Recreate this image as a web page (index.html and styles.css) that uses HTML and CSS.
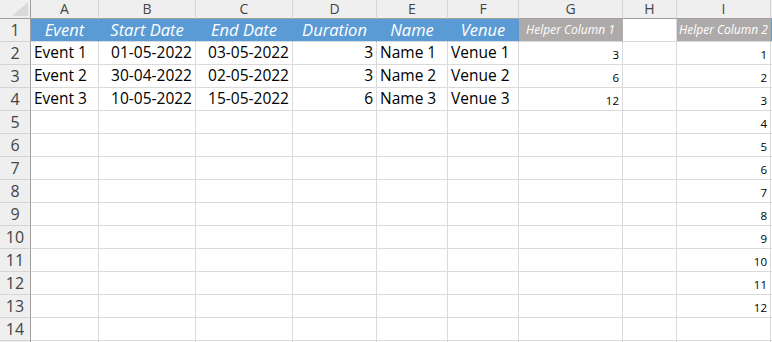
FILE: index.html
```html
<!DOCTYPE html>
<html>
<head>
<meta charset="utf-8">
<link rel="stylesheet" href="styles.css">
</head>
<body>
<div class="sheet">
  <div class="c corner"><svg class="tri" width="16" height="14" viewBox="0 0 16 14"><polygon points="16,0 16,14 0,14" fill="#d9d9d9"/></svg></div>
  <div class="c ch">A</div><div class="c ch">B</div><div class="c ch">C</div><div class="c ch">D</div><div class="c ch">E</div><div class="c ch">F</div><div class="c ch">G</div><div class="c ch">H</div><div class="c ch">I</div><div class="c ch last"></div>

  <div class="c rh">1</div>
  <div class="c th">Event</div><div class="c th">Start Date</div><div class="c th">End Date</div><div class="c th">Duration</div><div class="c th">Name</div><div class="c th">Venue</div><div class="c hh">Helper Column 1</div><div class="c"></div><div class="c hh">Helper Column 2</div><div class="c thj"></div>

  <div class="c rh">2</div>
  <div class="c">Event 1</div><div class="c r">01-05-2022</div><div class="c r">03-05-2022</div><div class="c r">3</div><div class="c">Name 1</div><div class="c">Venue 1</div><div class="c r sm">3</div><div class="c"></div><div class="c r sm">1</div><div class="c"></div>

  <div class="c rh">3</div>
  <div class="c">Event 2</div><div class="c r">30-04-2022</div><div class="c r">02-05-2022</div><div class="c r">3</div><div class="c">Name 2</div><div class="c">Venue 2</div><div class="c r sm">6</div><div class="c"></div><div class="c r sm">2</div><div class="c"></div>

  <div class="c rh">4</div>
  <div class="c">Event 3</div><div class="c r">10-05-2022</div><div class="c r">15-05-2022</div><div class="c r">6</div><div class="c">Name 3</div><div class="c">Venue 3</div><div class="c r sm">12</div><div class="c"></div><div class="c r sm">3</div><div class="c"></div>

  <div class="c rh">5</div>
  <div class="c"></div><div class="c"></div><div class="c"></div><div class="c"></div><div class="c"></div><div class="c"></div><div class="c"></div><div class="c"></div><div class="c r sm">4</div><div class="c"></div>

  <div class="c rh">6</div>
  <div class="c"></div><div class="c"></div><div class="c"></div><div class="c"></div><div class="c"></div><div class="c"></div><div class="c"></div><div class="c"></div><div class="c r sm">5</div><div class="c"></div>

  <div class="c rh">7</div>
  <div class="c"></div><div class="c"></div><div class="c"></div><div class="c"></div><div class="c"></div><div class="c"></div><div class="c"></div><div class="c"></div><div class="c r sm">6</div><div class="c"></div>

  <div class="c rh">8</div>
  <div class="c"></div><div class="c"></div><div class="c"></div><div class="c"></div><div class="c"></div><div class="c"></div><div class="c"></div><div class="c"></div><div class="c r sm">7</div><div class="c"></div>

  <div class="c rh">9</div>
  <div class="c"></div><div class="c"></div><div class="c"></div><div class="c"></div><div class="c"></div><div class="c"></div><div class="c"></div><div class="c"></div><div class="c r sm">8</div><div class="c"></div>

  <div class="c rh">10</div>
  <div class="c"></div><div class="c"></div><div class="c"></div><div class="c"></div><div class="c"></div><div class="c"></div><div class="c"></div><div class="c"></div><div class="c r sm">9</div><div class="c"></div>

  <div class="c rh">11</div>
  <div class="c"></div><div class="c"></div><div class="c"></div><div class="c"></div><div class="c"></div><div class="c"></div><div class="c"></div><div class="c"></div><div class="c r sm">10</div><div class="c"></div>

  <div class="c rh">12</div>
  <div class="c"></div><div class="c"></div><div class="c"></div><div class="c"></div><div class="c"></div><div class="c"></div><div class="c"></div><div class="c"></div><div class="c r sm">11</div><div class="c"></div>

  <div class="c rh">13</div>
  <div class="c"></div><div class="c"></div><div class="c"></div><div class="c"></div><div class="c"></div><div class="c"></div><div class="c"></div><div class="c"></div><div class="c r sm">12</div><div class="c"></div>

  <div class="c rh">14</div>
  <div class="c"></div><div class="c"></div><div class="c"></div><div class="c"></div><div class="c"></div><div class="c"></div><div class="c"></div><div class="c"></div><div class="c"></div><div class="c"></div>

  <div class="c rh"></div>
  <div class="c"></div><div class="c"></div><div class="c"></div><div class="c"></div><div class="c"></div><div class="c"></div><div class="c"></div><div class="c"></div><div class="c"></div><div class="c"></div>
</div>
</body>
</html>
```

FILE: styles.css
```css
html, body {
  margin: 0;
  padding: 0;
  background: #ffffff;
}
body {
  width: 772px;
  height: 342px;
  overflow: hidden;
  font-family: "Open Sans", "Noto Sans", sans-serif;
}
.sheet {
  display: grid;
  grid-template-columns: 31px 68px 97px 97px 84px 71px 71px 104px 54px 94px 20px;
  grid-template-rows: 19px repeat(15, 23px);
  width: 792px;
}
.c {
  box-sizing: border-box;
  border-right: 1px solid #dadada;
  border-bottom: 1px solid #dadada;
  font-size: 15.5px;
  color: #000;
  display: flex;
  align-items: center;
  padding: 0 3px 0 3px;
  white-space: nowrap;
  overflow: hidden;
  line-height: 1;
}
.r {
  justify-content: flex-end;
  padding-right: 3px;
}
.sm {
  font-size: 11.5px;
  padding-top: 3px;
}
.corner {
  background: #efefef;
  border-right: 1px solid #9f9f9f;
  border-bottom: 1px solid #9f9f9f;
  position: relative;
}
.tri {
  position: absolute;
  right: 2px;
  bottom: 2px;
}
.ch {
  background: #efefef;
  color: #444;
  justify-content: center;
  font-size: 14px;
  overflow: visible;
  border-right: 1px solid #d4d4d4;
  border-bottom: 1px solid #9f9f9f;
  padding: 0;
}
.rh {
  background: #efefef;
  color: #444;
  justify-content: center;
  font-size: 16px;
  border-right: 1px solid #9f9f9f;
  border-bottom: 1px solid #d4d4d4;
  padding: 0;
}
.th {
  background: #5b9bd5;
  color: #fff;
  font-style: italic;
  font-size: 16.5px;
  justify-content: center;
  border-right-color: #5b9bd5;
  border-bottom-color: #dadada;
  padding: 0;
}
.thj {
  background: #5b9bd5;
}
.hh {
  background: #aeaaaa;
  color: #fff;
  font-style: italic;
  font-size: 12px;
  justify-content: center;
  border-right-color: #aeaaaa;
  padding: 0;
}
```
